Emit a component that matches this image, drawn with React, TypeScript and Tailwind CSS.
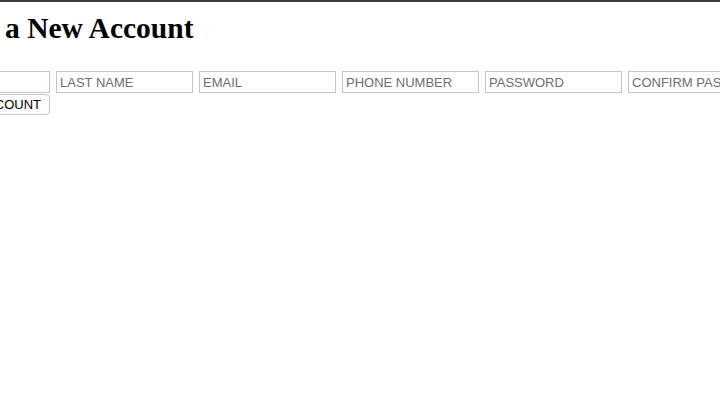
const fields = [
  "FIRST NAME",
  "LAST NAME",
  "EMAIL",
  "PHONE NUMBER",
  "PASSWORD",
  "CONFIRM PASSWORD",
];

const SignUp = () => {
  return (
    <div className="w-[720px] h-[405px] overflow-hidden bg-white border-t-2 border-[#3c3c3c]">
      <div className="ml-[-87px] w-[1000px]">
        <h1 className="mt-[8px] mb-[25px] text-[29.5px] leading-[36px] font-bold text-black font-['Liberation_Serif',serif] whitespace-nowrap">
          Create a New Account
        </h1>
        <form className="flex flex-col items-start gap-[1px]">
          <div className="flex gap-[6px]">
            {fields.map((name) => (
              <input
                key={name}
                type={name.includes("PASSWORD") ? "password" : "text"}
                placeholder={name}
                autoComplete="off"
                className="shrink-0 w-[137px] h-[22px] px-[3px] border border-[#c6c6c6] bg-white text-[13px] text-black placeholder:text-[#6e6e6e] font-['Liberation_Sans',sans-serif] outline-none"
              />
            ))}
          </div>
          <button
            type="submit"
            className="w-[137px] h-[21px] border border-[#c6c6c6] rounded-[4px] bg-white text-[13px] leading-none text-black font-['Liberation_Sans',sans-serif]"
          >
            CREATE ACCOUNT
          </button>
        </form>
      </div>
    </div>
  );
};

export default SignUp;
